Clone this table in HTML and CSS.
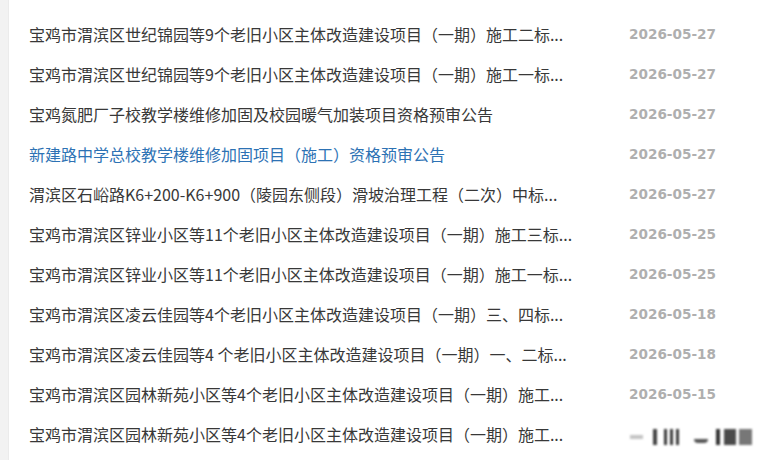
FILE: index.html
```html
<!DOCTYPE html>
<html lang="zh-CN">
<head>
<meta charset="utf-8">
<link rel="stylesheet" href="styles.css">
</head>
<body>
<div class="page">
  <div class="rail"></div>
  <ul class="list">
    <li class="row"><span class="title">宝鸡市渭滨区世纪锦园等9个老旧小区主体改造建设项目（一期）施工二标...</span><span class="date">2026-05-27</span></li>
    <li class="row"><span class="title">宝鸡市渭滨区世纪锦园等9个老旧小区主体改造建设项目（一期）施工一标...</span><span class="date">2026-05-27</span></li>
    <li class="row"><span class="title">宝鸡氮肥厂子校教学楼维修加固及校园暖气加装项目资格预审公告</span><span class="date">2026-05-27</span></li>
    <li class="row active"><span class="title">新建路中学总校教学楼维修加固项目（施工）资格预审公告</span><span class="date">2026-05-27</span></li>
    <li class="row"><span class="title">渭滨区石峪路K6+200-K6+900（陵园东侧段）滑坡治理工程（二次）中标...</span><span class="date">2026-05-27</span></li>
    <li class="row"><span class="title">宝鸡市渭滨区锌业小区等11个老旧小区主体改造建设项目（一期）施工三标...</span><span class="date">2026-05-25</span></li>
    <li class="row"><span class="title">宝鸡市渭滨区锌业小区等11个老旧小区主体改造建设项目（一期）施工一标...</span><span class="date">2026-05-25</span></li>
    <li class="row"><span class="title">宝鸡市渭滨区凌云佳园等4个老旧小区主体改造建设项目（一期）三、四标...</span><span class="date">2026-05-18</span></li>
    <li class="row"><span class="title">宝鸡市渭滨区凌云佳园等4 个老旧小区主体改造建设项目（一期）一、二标...</span><span class="date">2026-05-18</span></li>
    <li class="row"><span class="title">宝鸡市渭滨区园林新苑小区等4个老旧小区主体改造建设项目（一期）施工...</span><span class="date">2026-05-15</span></li>
    <li class="row"><span class="title">宝鸡市渭滨区园林新苑小区等4个老旧小区主体改造建设项目（一期）施工...</span><span class="date"></span></li>
  </ul>
  <div class="watermark">
    <span class="wm a"></span><span class="wm b"></span><span class="wm c"></span><span class="wm d"></span><span class="wm e"></span><span class="wm f"></span><span class="wm g"></span><span class="wm h"></span><span class="wm i"></span>
  </div>
</div>
</body>
</html>
```

FILE: styles.css
```css
html, body {
  margin: 0;
  padding: 0;
  background: #fff;
}
.page {
  position: relative;
  display: flex;
  width: 765px;
  height: 460px;
  overflow: hidden;
}
.rail {
  width: 8px;
  flex: none;
  background: #f2f2f2;
  border-right: 1px solid #ebebeb;
}
.list {
  list-style: none;
  margin: 0;
  padding: 14px 0 0 20px;
  flex: 1;
}
.row {
  display: grid;
  grid-template-columns: 600px auto;
  height: 40px;
  align-items: center;
}
.title {
  font-family: "Noto Sans CJK SC", "Noto Sans", sans-serif;
  font-size: 16px;
  color: #383838;
  white-space: nowrap;
}
.active .title {
  color: #2d72b4;
}
.date {
  font-family: "DejaVu Sans", sans-serif;
  font-weight: bold;
  font-size: 13.6px;
  color: #afafaf;
}
.watermark {
  position: absolute;
  left: 628px;
  top: 426px;
  width: 130px;
  height: 22px;
  filter: blur(1px);
}
.wm {
  position: absolute;
  top: 3px;
  height: 16px;
  background: #555;
}
.wm.a { left: 2px; top: 9px; width: 13px; height: 4px; background: #c4c4c4; }
.wm.b { left: 25px; width: 4px; background: #444; }
.wm.c { left: 36px; width: 3px; background: #3a3a3a; }
.wm.d { left: 42px; width: 3px; background: #3a3a3a; }
.wm.e { left: 48px; width: 3px; background: #3a3a3a; }
.wm.f { left: 66px; top: 13px; width: 14px; height: 4px; border-radius: 0 0 7px 7px; background: #555; }
.wm.g { left: 88px; width: 4px; background: #333; }
.wm.h { left: 96px; width: 12px; background: #4a4a4a; }
.wm.i { left: 111px; width: 13px; background: #777; }
```
